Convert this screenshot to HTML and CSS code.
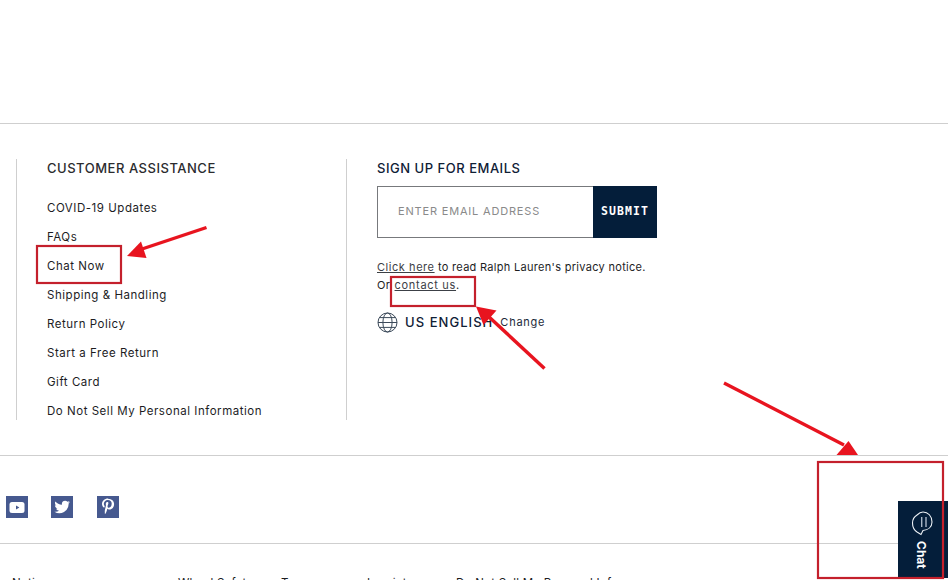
FILE: index.html
```html
<!DOCTYPE html>
<html lang="en">
<head>
<meta charset="utf-8">
<title>Footer</title>
<link rel="stylesheet" href="styles.css">
</head>
<body>
<main class="page">
  <section class="columns">
    <div class="col col-help">
      <h2 class="heading heading-help">CUSTOMER ASSISTANCE</h2>
      <ul class="links">
        <li>COVID-19 Updates</li>
        <li>FAQs</li>
        <li>Chat Now</li>
        <li>Shipping &amp; Handling</li>
        <li>Return Policy</li>
        <li>Start a Free Return</li>
        <li>Gift Card</li>
        <li>Do Not Sell My Personal Information</li>
      </ul>
    </div>
    <div class="col col-mail">
      <h2 class="heading">SIGN UP FOR EMAILS</h2>
      <form class="signup">
        <div class="email">ENTER EMAIL ADDRESS</div>
        <div class="submit">SUBMIT</div>
      </form>
      <p class="notice"><span class="link">Click here</span> to read Ralph Lauren's privacy notice.<br>Or <span class="link link-contact">contact us</span>.</p>
      <div class="locale">
        <svg class="globe" width="21" height="21" viewBox="0 0 21 21" fill="none" stroke="#3c4a5a" stroke-width="1">
          <circle cx="10.5" cy="10.5" r="9.5"/>
          <ellipse cx="10.5" cy="10.5" rx="4.6" ry="9.5"/>
          <path d="M2.4 5.6h16.2M1 10.5h19M2.4 15.4h16.2"/>
        </svg>
        <span class="lang">US ENGLISH</span>
        <span class="change">Change</span>
      </div>
    </div>
  </section>
  <section class="social">
    <span class="tile">
      <svg width="22" height="22" viewBox="0 0 22 22"><rect x="3.5" y="6" width="15" height="11" rx="2.5" fill="#fff"/><path d="M10 9.5l3.4 2-3.4 2z" fill="#46598f"/></svg>
    </span>
    <span class="tile">
      <svg width="22" height="22" viewBox="0 0 22 22"><path fill="#fff" d="M19 6.3c-.6.3-1.200.4-1.900.5.7-.4 1.200-1 1.400-1.800-.6.4-1.300.7-2 .8a3.200 3.200 0 0 0-5.500 2.900C8.300 8.600 6 7.400 4.400 5.400c-.8 1.500-.4 3.300 1 4.300-.5 0-1-.2-1.500-.4 0 1.500 1.100 2.900 2.600 3.200-.5.100-1 .2-1.400.1.400 1.300 1.600 2.200 3 2.200A6.500 6.500 0 0 1 3.400 15.700 9.200 9.200 0 0 0 17.600 7.500c.6-.3 1-.7 1.400-1.200z"/></svg>
    </span>
    <span class="tile tile-last">
      <svg width="22" height="22" viewBox="0 0 22 22"><path fill="#fff" d="M11.300 2.500c-4 0-6.300 2.600-6.300 5.500 0 1.300.7 3 1.900 3.500.3.100.5.100.6-.2l.2-1c0-.1 0-.2-.1-.4-.4-.5-.8-1.200-.8-2 0-2 1.600-3.900 4.100-3.900 2.200 0 3.800 1.400 3.800 3.600 0 2.400-1.200 4.100-2.800 4.100-.9 0-1.500-.8-1.300-1.600.2-1.100.8-2.200.8-3 0-.7-.3-1.200-1.100-1.200-.9 0-1.500.9-1.500 2.100 0 .8.200 1.200.2 1.200l-1.100 4.700c-.2 1.100-.1 2.700 0 4l.3.100c.6-.9 1.300-2.200 1.600-3.300l.6-2.200c.3.600 1.100 1 2.100 1 2.800 0 4.600-2.500 4.600-5.500 0-3.100-2.500-5-5.800-5z"/></svg>
    </span>
  </section>
  <nav class="legal">
    <span class="legal-a">Notices</span>
    <span class="legal-b">Wheel Safety</span>
    <span class="legal-c">Terms</span>
    <span class="legal-d">Imprint</span>
    <span class="legal-e">Do Not Sell My Personal Info</span>
  </nav>
</main>

<aside class="chat">
  <svg width="24" height="27" viewBox="0 0 24 27" fill="none" stroke="#eef2f6" stroke-width="1.100">
    <path d="M7 5C3.800 7 2.500 10 2.500 13c0 4 1.500 7 4.500 9l4 2.500 2-4c5-.5 9-3.500 9-8.500 0-6-4-10-9-10-2 0-4 1-6 3z"/>
    <path d="M11.700 7v10M16 7v10" stroke="#a9b6c6" stroke-width="1.400"/>
  </svg>
  <span class="chat-label">Chat</span>
</aside>

<svg class="notes" width="948" height="580" viewBox="0 0 948 580" fill="none">
  <g stroke="#c4202c" stroke-width="2.200">
    <rect x="37" y="246" width="84" height="37"/>
    <rect x="391" y="277" width="84" height="29"/>
    <rect x="818" y="462" width="125" height="116"/>
  </g>
  <g stroke="#e8141f" stroke-width="3.400">
    <path d="M206.500 227.500L142 249"/>
    <path d="M544.500 368.500L488 316"/>
    <path d="M724 383l120 62"/>
  </g>
  <g fill="#e8141f">
    <path d="M127 256l14-14.500 5.500 16.500z"/>
    <path d="M476 306.500l20.500 4-13 14.500z"/>
    <path d="M858 455h-21.500l12-14z"/>
  </g>
</svg>
```

FILE: styles.css
```css
* { box-sizing: border-box; }
html, body { margin: 0; height: 580px; overflow: hidden; background: #fff; }
body { position: relative; font-family: Inter, "Liberation Sans", sans-serif; color: #1d1d1f; }

.page { padding-top: 123px; }

.columns {
  display: flex;
  height: 333px;
  padding: 35px 0 35px 16px;
  border-top: 1px solid #cfcfcf;
  border-bottom: 1px solid #cfcfcf;
}
.col { height: 261px; }
.col-help { width: 330px; padding-left: 30px; border-left: 1px solid #cfcfcf; }
.col-mail { padding-left: 30px; border-left: 1px solid #cfcfcf; }

.heading {
  margin: -1px 0 0;
  font-size: 13px;
  line-height: 20px;
  font-weight: 500;
  letter-spacing: .52px;
  color: #0f2036;
}
.heading-help { color: #2b2b2e; }

.links { margin: 20px 0 0; padding: 0; list-style: none; }
.links li {
  height: 29px;
  font-size: 11.500px;
  line-height: 20px;
  letter-spacing: .53px;
}

.signup { display: flex; margin-top: 8px; width: 280px; height: 52px; }
.email {
  width: 216px;
  padding-left: 20px;
  border: 1px solid #77797c;
  border-right: 0;
  font-size: 11px;
  line-height: 49px;
  letter-spacing: .82px;
  color: #8a8a8a;
}
.submit {
  width: 64px;
  background: #041e3a;
  color: #fff;
  font-family: "DejaVu Sans Mono", "Liberation Mono", monospace;
  font-size: 11.500px;
  font-weight: 700;
  line-height: 50px;
  letter-spacing: 1.100px;
  text-align: center;
}

.notice {
  margin: 20px 0 0;
  font-size: 11px;
  line-height: 18px;
  letter-spacing: .3px;
}
.link { text-decoration: underline; color: #3c4046; letter-spacing: .55px; }
.link-contact { margin-left: 1px; letter-spacing: .7px; }

.locale { display: flex; align-items: center; margin-top: 16px; height: 24px; }
.globe { margin-right: 7px; }
.lang { font-size: 13px; font-weight: 500; letter-spacing: 1.050px; color: #0f2036; }
.change { margin-left: 7px; font-size: 11px; letter-spacing: .75px; color: #1d2a3a; }

.social {
  display: flex;
  gap: 23px;
  height: 88px;
  padding: 40px 0 0 6px;
  border-bottom: 1px solid #cfcfcf;
}
.tile { display: block; width: 22px; height: 22px; background: #46598f; }
.tile svg { display: block; }
.tile-last { margin-left: 1px; }

.legal {
  display: flex;
  padding: 31px 0 0 12px;
  font-size: 11.500px;
  line-height: 16px;
  letter-spacing: .25px;
}
.legal-a { width: 166px; }
.legal-b { width: 103px; }
.legal-c { width: 86px; }
.legal-d { width: 89px; }

.chat {
  position: absolute;
  right: 0;
  bottom: 2px;
  width: 50px;
  height: 77px;
  padding: 9px 0 0 12px;
  background: #041e3a;
  color: #fff;
}
.chat svg { display: block; }
.chat-label {
  position: absolute;
  left: 16px;
  top: 40px;
  writing-mode: vertical-rl;
  font-size: 12px;
  font-weight: 700;
  line-height: 14px;
}

.notes { position: absolute; left: 0; top: 0; pointer-events: none; }
```
